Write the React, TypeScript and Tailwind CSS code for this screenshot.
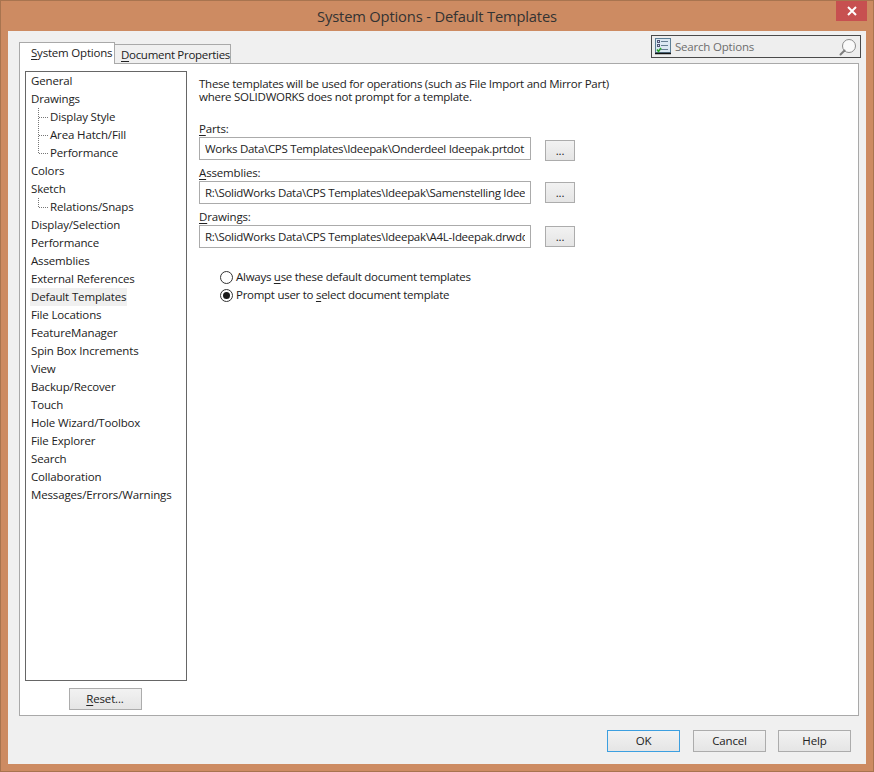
import React from "react";

const font = { fontFamily: '"Open Sans", "Noto Sans", sans-serif' };

const tree: [string, number][] = [
  ["General", 0], ["Drawings", 0], ["Display Style", 1], ["Area Hatch/Fill", 1], ["Performance", 2],
  ["Colors", 0], ["Sketch", 0], ["Relations/Snaps", 2], ["Display/Selection", 0], ["Performance", 0],
  ["Assemblies", 0], ["External References", 0], ["Default Templates", 0], ["File Locations", 0],
  ["FeatureManager", 0], ["Spin Box Increments", 0], ["View", 0], ["Backup/Recover", 0], ["Touch", 0],
  ["Hole Wizard/Toolbox", 0], ["File Explorer", 0], ["Search", 0], ["Collaboration", 0], ["Messages/Errors/Warnings", 0],
];

function U({ children }: { children: React.ReactNode }) {
  return <span className="underline underline-offset-2">{children}</span>;
}

function Btn({ children, cls, primary }: { children: React.ReactNode; cls: string; primary?: boolean }) {
  return (
    <div
      className={`flex items-center justify-center border bg-gradient-to-b from-[#f2f2f2] to-[#e5e5e5] text-[#222] ${
        primary ? "border-[#3c9fe0]" : "border-[#acacac]"
      } ${cls}`}
    >
      {children}
    </div>
  );
}

function PathRow({ label, value, mt, btnMt }: { label: React.ReactNode; value: string; mt: string; btnMt: string }) {
  return (
    <div className={`flex flex-col ${mt}`}>
      <div className="h-[16px] leading-[16px] text-[#222]">{label}</div>
      <div className="flex h-[23px] items-start">
        <div className="h-[23px] w-[332px] border border-[#ababab] bg-white pl-[5px] pr-[5px] leading-[21px] tracking-[-0.3px] text-[#222]">
          <div className="h-[21px] overflow-hidden whitespace-nowrap">{value}</div>
        </div>
        <Btn cls={`ml-[14px] h-[21px] w-[30px] ${btnMt}`}>...</Btn>
      </div>
    </div>
  );
}

function Radio({ checked, children }: { checked?: boolean; children: React.ReactNode }) {
  return (
    <div className="flex h-[18px] items-center tracking-[-0.27px] text-[#222]">
      <span className="mr-[3px] flex h-[13px] w-[13px] items-center justify-center rounded-full border border-[#333] bg-white">
        {checked && <span className="h-[7px] w-[7px] rounded-full bg-[#1a1a1a]" />}
      </span>
      <span>{children}</span>
    </div>
  );
}

function TreeRow({ label, kind, active }: { label: string; kind: number; active: boolean }) {
  return (
    <div className="relative flex h-[18px] items-center">
      {kind > 0 && (
        <svg className="absolute left-[12px] top-0" width="12" height="18" viewBox="0 0 12 18">
          <path
            d={kind === 2 ? "M0.5 0V9M1 9.5H10" : "M0.5 0V18M1 9.5H10"}
            stroke="#777"
            strokeWidth="1"
            strokeDasharray="1 1"
            fill="none"
          />
        </svg>
      )}
      <span
        className={`whitespace-nowrap px-[1px] leading-[18px] text-[#222] ${kind > 0 ? "ml-[23px]" : "ml-[4px]"} ${
          active ? "bg-[#f0f0f0]" : ""
        }`}
      >
        {label}
      </span>
    </div>
  );
}

export default function App() {
  return (
    <div style={font} className="h-[772px] w-[874px] overflow-hidden border border-[#a8744f] bg-[#cd8b62] text-[11.5px] tracking-[-0.15px]">
      {/* title bar */}
      <div className="relative flex h-[30px] items-center justify-center">
        <span className="text-[14.7px] text-[#333]">System Options - Default Templates</span>
        <div className="absolute right-[6px] top-0 flex h-[20px] w-[31px] items-center justify-center bg-[#c75050]">
          <svg width="10" height="10" viewBox="0 0 10 10">
            <path d="M1 1L9 9M9 1L1 9" stroke="#fff" strokeWidth="2" />
          </svg>
        </div>
      </div>

      {/* client */}
      <div className="mx-[7px] flex h-[733px] w-[858px] flex-col bg-[#f0f0f0] pl-[11px] pr-[7px]">
        {/* tab strip */}
        <div className="flex h-[32px] items-end justify-between">
          <div className="flex items-end">
            <div className="z-10 -mb-[1px] h-[22px] w-[96px] whitespace-nowrap border border-b-0 border-[#a9a9a9] bg-white pl-[11px] leading-[19px] tracking-[-0.2px] text-[#222]">
              <U>S</U>ystem Options
            </div>
            <div className="h-[19px] w-[116px] whitespace-nowrap border border-b-0 border-l-0 border-[#a9a9a9] bg-[#f0f0f0] pl-[6px] leading-[19px] tracking-[-0.3px] text-[#222]">
              <U>D</U>ocument Properties
            </div>
          </div>
          <div className="mb-[5px] mr-[-2px] flex h-[23px] w-[210px] items-center border border-[#4a4a4a] bg-[#eeeeee] pl-[3px] pr-[4px]">
            <svg width="17" height="17" viewBox="0 0 17 17">
              <rect x="0.5" y="0.5" width="15" height="14" fill="#dbe8f2" stroke="#5d7f96" />
              <path d="M0 15.5H16" stroke="#111" strokeWidth="1.5" />
              <rect x="2.5" y="2.5" width="2" height="2" fill="none" stroke="#557" />
              <rect x="2.5" y="6.5" width="2" height="2" fill="none" stroke="#557" />
              <path d="M6 3.5H13M6 7.5H13M6 11.5H13" stroke="#667f92" />
              <path d="M2 11.5L3.5 13.5L6 10" stroke="#2aa52a" strokeWidth="1.6" fill="none" />
            </svg>
            <span className="ml-[3px] flex-1 tracking-[-0.2px] text-[#6d6d6d]">Search Options</span>
            <svg width="18" height="18" viewBox="0 0 18 18">
              <circle cx="11" cy="8" r="6.5" fill="#fafafa" stroke="#8c8c8c" />
              <path d="M6.5 12.5L2.5 16.5" stroke="#7d7d7d" strokeWidth="2" strokeLinecap="round" />
            </svg>
          </div>
        </div>

        {/* panel */}
        <div className="flex h-[653px] w-full border border-[#a9a9a9] bg-white pl-[5px] pt-[7px]">
          <div className="flex w-[162px] flex-col items-center">
            <div className="h-[610px] w-[162px] border border-[#666] bg-white">
              {tree.map(([label, kind], i) => (
                <TreeRow key={i} label={label} kind={kind} active={label === "Default Templates"} />
              ))}
            </div>
            <Btn cls="mt-[7px] h-[22px] w-[73px] mr-[2px]">
              <U>R</U>eset...
            </Btn>
          </div>

          <div className="ml-[12px] flex flex-col">
            <p className="mt-[6px] w-[480px] leading-[13px] tracking-[-0.25px] text-[#222]">
              These templates will be used for operations (such as File Import and Mirror Part)
              <br />
              where SOLIDWORKS does not prompt for a template.
            </p>
            <PathRow
              mt="mt-[18px]"
              btnMt="mt-[3px]"
              label={<><U>P</U>arts:</>}
              value="Works Data\CPS Templates\Ideepak\Onderdeel Ideepak.prtdot"
            />
            <PathRow
              mt="mt-[5px]"
              btnMt="mt-[1px]"
              label={<><U>A</U>ssemblies:</>}
              value="R:\SolidWorks Data\CPS Templates\Ideepak\Samenstelling Ideepak.asmdot"
            />
            <PathRow
              mt="mt-[5px]"
              btnMt="mt-[1px]"
              label={<><U>D</U>rawings:</>}
              value="R:\SolidWorks Data\CPS Templates\Ideepak\A4L-Ideepak.drwdot"
            />
            <div className="ml-[21px] mt-[20px] flex flex-col">
              <Radio>Always <U>u</U>se these default document templates</Radio>
              <Radio checked>Prompt user to <U>s</U>elect document template</Radio>
            </div>
          </div>
        </div>

        {/* footer */}
        <div className="mt-[14px] flex justify-end pr-[8px]">
          <Btn primary cls="h-[22px] w-[73px]">OK</Btn>
          <Btn cls="ml-[13px] h-[22px] w-[73px]">Cancel</Btn>
          <Btn cls="ml-[12px] h-[22px] w-[73px]">Help</Btn>
        </div>
      </div>
    </div>
  );
}
